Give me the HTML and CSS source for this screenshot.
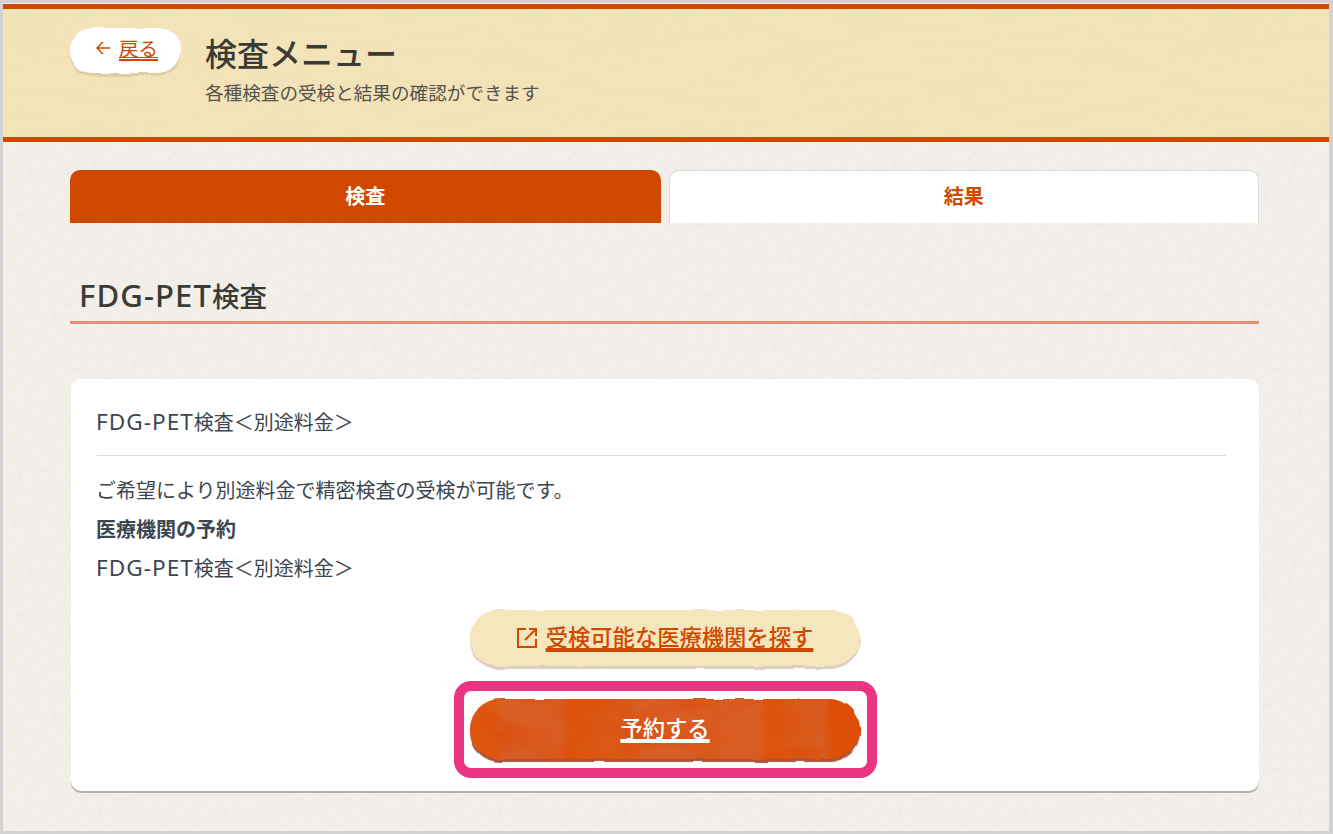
FILE: index.html
```html
<!DOCTYPE html>
<html lang="ja">
<head>
  <meta charset="utf-8">
  <title>検査メニュー</title>
  <link rel="stylesheet" href="styles.css">
</head>
<body>

  <!-- rough edge used by the paper buttons -->
  <svg class="defs" width="0" height="0" aria-hidden="true">
    <filter id="rough" x="-5%" y="-20%" width="110%" height="140%" color-interpolation-filters="sRGB">
      <feTurbulence type="fractalNoise" baseFrequency="0.05" numOctaves="1" seed="7"/>
      <feColorMatrix values="1 0 0 0 0  0 1 0 0 0  0 0 1 0 0  0 0 0 0 1" result="map"/>
      <feDisplacementMap in="SourceGraphic" in2="map" scale="4" xChannelSelector="R" yChannelSelector="G"/>
    </filter>
  </svg>

  <div class="frame">

    <!-- Header -->
    <header class="page-header">
      <a class="back-btn" href="#">
        <span class="back-arrow">
          <svg width="16" height="16" viewBox="0 0 16 16" fill="none" stroke="currentColor" stroke-width="1.5"><path d="M15 8H2M8 2 2 8l6 6"/></svg>
        </span>
        <span class="back-label">戻る</span>
      </a>
      <div class="page-titles">
        <h1 class="page-title">検査メニュー</h1>
        <p class="page-sub">各種検査の受検と結果の確認ができます</p>
      </div>
    </header>

    <main class="content">

      <!-- Tabs -->
      <div class="tabs">
        <a class="tab tab-active" href="#">検査</a>
        <a class="tab" href="#">結果</a>
      </div>

      <h2 class="section-title"><span class="latin">FDG-PET</span>検査</h2>

      <!-- Card -->
      <section class="card">
        <div class="card-title"><span class="latin">FDG-PET</span>検査＜別途料金＞</div>
        <p class="card-text">ご希望により別途料金で精密検査の受検が可能です。</p>
        <p class="card-text card-label">医療機関の予約</p>
        <p class="card-text"><span class="latin">FDG-PET</span>検査＜別途料金＞</p>

        <div class="actions">
          <a class="paper-btn paper-btn-light" href="#">
            <svg width="20" height="20" viewBox="0 0 20 20" fill="none" stroke="currentColor" stroke-width="2"><path d="M9 1H1v18h18v-8M12 1h7v7M19 1 8 12"/></svg>
            <span class="paper-label">受検可能な医療機関を探す</span>
          </a>
          <div class="highlight">
            <a class="paper-btn paper-btn-main" href="#">
              <span class="paper-label">予約する</span>
            </a>
          </div>
        </div>
      </section>

    </main>
  </div>

</body>
</html>
```

FILE: styles.css
```css
* {
  box-sizing: border-box;
}

html, body {
  margin: 0;
  padding: 0;
}

body {
  font-family: "Noto Sans CJK JP", "Noto Sans", sans-serif;
  color: #3c3a35;
  background-color: #fff;
}

a {
  color: inherit;
}

.defs {
  position: absolute;
}

/* latin letters run wider than the kanji font gives */
.latin {
  font-family: "Noto Sans", sans-serif;
  font-size: 1.13em;
  letter-spacing: 0.045em;
  line-height: 1;
}

.frame {
  width: 1333px;
  height: 834px;
  border: 3px solid #d2d2d4;
  border-right-width: 4px;
  padding-top: 1px;
  overflow: hidden;
  background-color: #f3f0eb;
  background-image: url("data:image/svg+xml,%3Csvg xmlns='http://www.w3.org/2000/svg' width='400' height='400'%3E%3Cfilter id='n'%3E%3CfeTurbulence type='fractalNoise' baseFrequency='0.2' numOctaves='3' stitchTiles='stitch'/%3E%3CfeColorMatrix values='0 0 0 0 0.65 0 0 0 0 0.6 0 0 0 0 0.5 0.3 0 0 0 -0.12'/%3E%3C/filter%3E%3Crect width='400' height='400' filter='url(%23n)'/%3E%3C/svg%3E");
}

/* Header */
.page-header {
  display: flex;
  align-items: flex-start;
  gap: 25px;
  height: 138px;
  padding: 19px 67px 0;
  border-top: 5px solid #cf4a00;
  border-bottom: 5px solid #cf4a00;
  background-color: #f3e3b9;
  background-image: url("data:image/svg+xml,%3Csvg xmlns='http://www.w3.org/2000/svg' width='600' height='200'%3E%3Cfilter id='n'%3E%3CfeTurbulence type='fractalNoise' baseFrequency='0.012 0.12' numOctaves='3' stitchTiles='stitch'/%3E%3CfeColorMatrix values='0 0 0 0 0.85 0 0 0 0 0.72 0 0 0 0 0.45 0.4 0 0 0 -0.15'/%3E%3C/filter%3E%3Crect width='600' height='200' filter='url(%23n)'/%3E%3C/svg%3E");
}

.back-btn {
  position: relative;
  z-index: 0;
  display: flex;
  align-items: center;
  justify-content: center;
  gap: 8px;
  flex: none;
  width: 110px;
  height: 45px;
  padding: 0 0 5px 3px;
  color: #cf4a00;
  font-size: 19.500px;
  line-height: 1;
}

.back-btn::before {
  content: "";
  position: absolute;
  inset: 0;
  z-index: -1;
  border-radius: 22px;
  background: #fff;
  box-shadow: 0 3px 0 #dfcda5;
  filter: url(#rough);
}

.back-arrow {
  display: flex;
  margin-top: -1px;
}

.back-label {
  text-decoration: underline;
  text-decoration-thickness: 1.500px;
  text-underline-offset: 3px;
}

.page-titles {
  padding-top: 1px;
}

.page-title {
  margin: 0;
  font-size: 32px;
  font-weight: 500;
  line-height: 46px;
  color: #3b3a34;
}

.page-sub {
  margin: 3px 0 0;
  font-size: 18.600px;
  line-height: 28px;
  color: #55524a;
}

/* Tabs */
.content {
  padding: 28px 70px 0 67px;
}

.tabs {
  display: flex;
  gap: 8px;
}

.tab {
  flex: 1;
  height: 53px;
  display: flex;
  align-items: center;
  justify-content: center;
  padding-bottom: 3px;
  border: 1.500px solid #dedcd8;
  border-bottom: none;
  border-radius: 10px 10px 0 0;
  background: #fff;
  color: #cf4a00;
  font-size: 20px;
  font-weight: 700;
  text-decoration: none;
}

.tab-active {
  border-color: #cf4a00;
  background: #cf4a00;
  color: #fff;
}

/* Section heading */
.section-title {
  margin: 50px 0 0;
  padding: 0 10px 0 9px;
  height: 51px;
  font-size: 27.500px;
  font-weight: 500;
  line-height: 44px;
  color: #3b3a34;
  border-bottom: 3px solid #e88e72;
}

.section-title .latin {
  letter-spacing: 0.035em;
}

/* Card */
.card {
  height: 412px;
  margin: 55px 0 0 1px;
  padding: 26px 33px 0 26px;
  border-radius: 10px;
  background: #fff;
  box-shadow: 0 2px 0 #b5b1ab;
}

.card-title {
  height: 51px;
  border-bottom: 1px solid #dcdcdc;
  font-size: 20px;
  line-height: 34px;
  text-indent: -1px;
  color: #3d4650;
  margin-bottom: 14px;
}

.card-text {
  margin: 0;
  font-size: 20px;
  line-height: 39px;
  text-indent: -1px;
  color: #3d4650;
}

.card-label {
  font-weight: 700;
}

/* Buttons */
.actions {
  display: flex;
  flex-direction: column;
  align-items: center;
  margin: 23px -7px 0 0;
}

.paper-btn {
  position: relative;
  z-index: 0;
  display: flex;
  align-items: center;
  justify-content: center;
  gap: 9px;
  width: 390px;
  font-size: 22.300px;
  font-weight: 500;
  line-height: 1;
}

.paper-btn::before {
  content: "";
  position: absolute;
  inset: 0;
  z-index: -1;
  border-radius: 30px;
  filter: url(#rough);
}

.paper-label {
  text-decoration: underline;
  text-decoration-thickness: 1.500px;
  text-underline-offset: 4px;
  padding-bottom: 3px;
}

.paper-btn-light {
  height: 56px;
  color: #cf4a00;
}

.paper-btn-light::before {
  background: #f5e6bd;
  box-shadow: 0 3px 1px #dccfc0;
}

.highlight {
  display: flex;
  justify-content: center;
  width: 423px;
  height: 97px;
  margin-top: 15px;
  padding-top: 8px;
  border: 10px solid #ec3485;
  border-radius: 17px;
}

.paper-btn-main {
  height: 60px;
  color: #fff;
}

/* watercolour mottling over faint bands */
.paper-btn-main::before {
  background-color: #da5a16;
  background-image:
    url("data:image/svg+xml,%3Csvg xmlns='http://www.w3.org/2000/svg' width='390' height='60'%3E%3Cfilter id='n' color-interpolation-filters='sRGB'%3E%3CfeTurbulence type='fractalNoise' baseFrequency='0.02 0.04' numOctaves='3' seed='3'/%3E%3CfeColorMatrix values='0 0 0 0 0.87 0 0 0 0 0.28 0 0 0 0 0.02 1.2 0 0 0 -0.45'/%3E%3C/filter%3E%3Crect width='390' height='60' filter='url(%23n)'/%3E%3C/svg%3E"),
    linear-gradient(90deg, #dc5a12 0, #dc5a12 26px, #d95e24 30px, #d95e24 92px, #dc560e 98px, #d95a1a 160px, #d85e24 170px, #d85e24 290px, #dc560e 298px, #d95c20 355px, #dd5008 362px, #dd5008 100%);
  box-shadow: 0 3px 1px #a8533a;
}
```
